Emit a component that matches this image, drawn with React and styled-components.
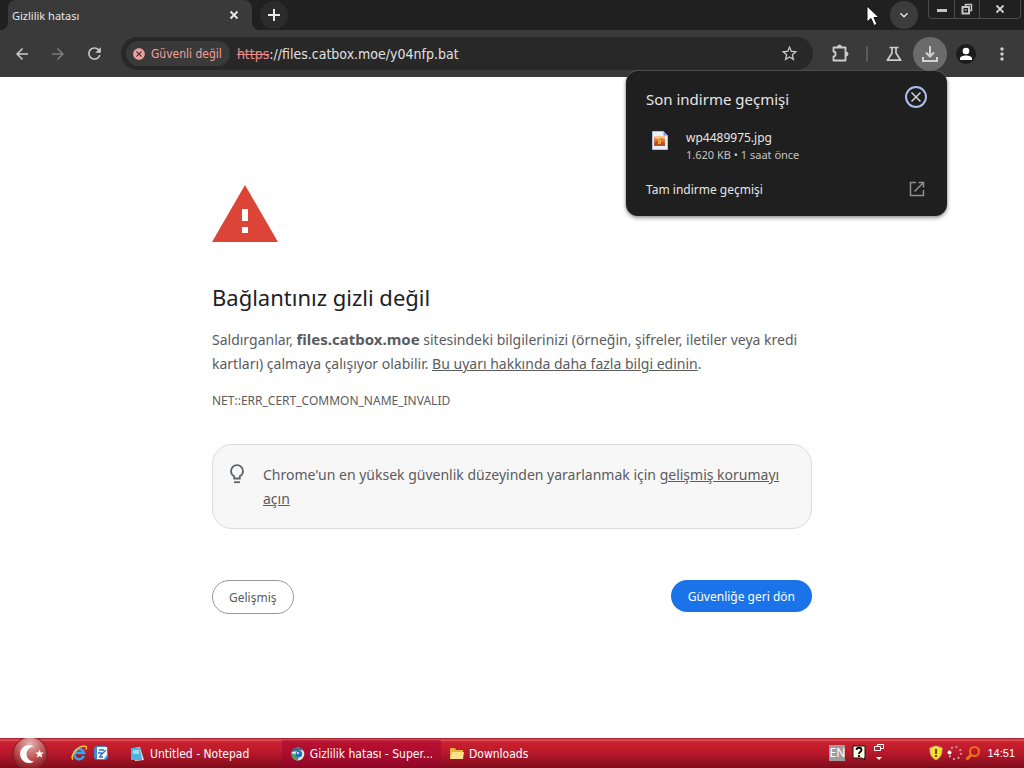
import React from "react";
import styled, { createGlobalStyle, css } from "styled-components";
import { MdArrowBack, MdArrowForward, MdRefresh, MdStarBorder, MdMoreVert, MdCancel, MdKeyboardArrowDown } from "react-icons/md";

const GlobalStyle = createGlobalStyle`
    * {
        box-sizing: border-box;
    }
    body {
        margin: 0;
        background: #ffffff;
    }
    body, button, input {
        font-family: "Noto Sans", "DejaVu Sans Condensed", sans-serif;
    }
    button {
        padding: 0;
        border: none;
        background: none;
        color: inherit;
        cursor: pointer;
    }
`;

const condensed = `"DejaVu Sans Condensed", "Noto Sans", sans-serif`;

const Screen = styled.div`
    min-height: 100vh;
    display: flex;
    flex-direction: column;
`;

/* tab strip */

const TabStrip = styled.header`
    height: 30px;
    display: flex;
    align-items: stretch;
    background: #202020;
    color: #e8e8e8;
`;

const Tab = styled.div`
    position: relative;
    width: 244px;
    margin-left: 8px;
    padding: 0 10px 0 4px;
    display: flex;
    align-items: center;
    justify-content: space-between;
    border-radius: 8px 8px 0 0;
    background: #3a3a3a;

    &::before, &::after {
        content: "";
        position: absolute;
        bottom: 0;
        width: 8px;
        height: 8px;
    }
    &::before {
        left: -8px;
        background: radial-gradient(circle at 0 0, #202020 8px, #3a3a3a 8px);
    }
    &::after {
        right: -8px;
        background: radial-gradient(circle at 100% 0, #202020 8px, #3a3a3a 8px);
    }
`;

const TabTitle = styled.span`
    font-size: 11px;
    white-space: nowrap;
`;

const TabClose = styled.button`
    width: 16px;
    height: 16px;
    display: flex;
    align-items: center;
    justify-content: center;
`;

const RoundButton = styled.button`
    width: ${({ $size }) => $size}px;
    height: ${({ $size }) => $size}px;
    align-self: center;
    display: flex;
    align-items: center;
    justify-content: center;
    flex-shrink: 0;
    border-radius: 50%;
    background: ${({ $bg }) => $bg};
`;

const StripLeft = styled.div`
    flex: 1;
    display: flex;
    gap: 8px;
`;

const StripRight = styled.div`
    display: flex;
    align-items: flex-start;
    gap: 10px;
    padding-right: 3px;
`;

const WindowControls = styled.div`
    display: flex;
    height: 19px;
    border: 1px solid #4c4c4c;
    border-top: none;
    border-radius: 0 0 4px 4px;
`;

const WindowButton = styled.button`
    width: ${({ $wide }) => ($wide ? 41 : 25)}px;
    display: flex;
    align-items: center;
    justify-content: center;
    color: #cfcfcf;

    & + & {
        border-left: 1px solid #4c4c4c;
    }
`;

/* toolbar */

const Toolbar = styled.div`
    position: relative;
    height: 47px;
    padding: 0 4px;
    display: flex;
    align-items: center;
    background: #3a3a3a;
    color: #c9c9c9;
`;

const ToolButton = styled.button`
    width: 36px;
    height: 34px;
    display: flex;
    align-items: center;
    justify-content: center;
    flex-shrink: 0;
    color: ${({ $dim }) => ($dim ? "#7d7d7d" : "#cdcdcd")};
`;

const ActiveCircle = styled.span`
    width: 34px;
    height: 34px;
    display: flex;
    align-items: center;
    justify-content: center;
    border-radius: 50%;
    background: #6b6b6b;
`;

const AvatarCircle = styled.span`
    width: 20px;
    height: 20px;
    display: flex;
    align-items: center;
    justify-content: center;
    border-radius: 50%;
    background: #1c1c1c;
`;

const Divider = styled.span`
    width: 2px;
    height: 16px;
    margin: 0 8px;
    border-radius: 1px;
    background: #5a5a5a;
`;

const AddressBar = styled.div`
    flex: 1;
    height: 33px;
    margin: 0 9px;
    padding: 0 14px 0 5px;
    display: flex;
    align-items: center;
    border-radius: 17px;
    background: #282828;
`;

const SecurityChip = styled.button`
    height: 25px;
    margin-right: 7px;
    padding: 0 8px 0 6px;
    display: flex;
    align-items: center;
    gap: 5px;
    border-radius: 13px;
    background: #3a3a3a;
    color: #f2a09c;
    font-family: ${condensed};
    font-size: 12px;
    white-space: nowrap;
`;

const Scheme = styled.label`
    color: #ee8a88;
    font-family: ${condensed};
    font-size: 14px;
    text-decoration: line-through;
`;

const UrlInput = styled.input`
    flex: 1;
    min-width: 0;
    padding: 0;
    border: none;
    outline: none;
    background: none;
    color: #e0e0e0;
    font-family: ${condensed};
    font-size: 14px;
`;

/* downloads popup */

const DownloadPopup = styled.section`
    position: absolute;
    top: 41px;
    right: 77px;
    z-index: 2;
    width: 321px;
    padding: 14px 19px 16px 20px;
    border-radius: 12px;
    background: #1f1f1f;
    box-shadow: 0 0 2px #8a8a8a, 0 2px 4px rgba(0, 0, 0, 0.4);
    color: #e6e6e6;
`;

const PopupHeader = styled.div`
    height: 26px;
    display: flex;
    align-items: flex-start;
    justify-content: space-between;
`;

const PopupTitle = styled.h2`
    margin: 0;
    font-size: 15px;
    font-weight: 400;
    line-height: 28px;
`;

const PopupClose = styled.button`
    height: 24px;
    display: flex;
`;

const FileRow = styled.div`
    margin: 18px 0 15px 5px;
    display: flex;
    align-items: flex-start;
    gap: 17px;
`;

const FileIcon = styled.span`
    display: flex;
    padding-top: 2px;
`;

const FileText = styled.div`
    display: flex;
    flex-direction: column;
`;

const FileName = styled.span`
    font-size: 12px;
    line-height: 18px;
`;

const FileMeta = styled.span`
    color: #c4c4c4;
    font-size: 11px;
    line-height: 16px;
`;

const HistoryLink = styled.a`
    height: 22px;
    padding-right: 3px;
    display: flex;
    align-items: center;
    justify-content: space-between;
    color: #e6e6e6;
    font-size: 12px;
    text-decoration: none;
`;

/* warning page */

const Page = styled.main`
    flex: 1;
    padding: 108px 24px 40px;
    background: #ffffff;
    color: #5a5b5e;
`;

const Warning = styled.div`
    max-width: 600px;
    margin: 0 auto;
`;

const WarningArt = styled.div`
    height: 57px;
    display: flex;
`;

const Heading = styled.h1`
    margin: 40px 0 16px;
    color: #202124;
    font-size: 22px;
    font-weight: 400;
    line-height: 30px;
`;

const Paragraph = styled.p`
    margin: 0;
    font-size: 14px;
    line-height: 24px;
`;

const Host = styled.strong`
    font-size: 15px;
    line-height: 20px;
`;

const TextLink = styled.a`
    color: inherit;
    text-decoration: underline;
`;

const ErrorCode = styled.div`
    margin: 16px 0 34px;
    font-size: 12px;
    line-height: 18px;
`;

const Tip = styled.div`
    padding: 18px 20px 17px 14px;
    display: flex;
    align-items: flex-start;
    gap: 16px;
    border: 1px solid #dadce0;
    border-radius: 20px;
    background: #f7f7f7;

    svg {
        flex-shrink: 0;
    }
`;

const Actions = styled.div`
    margin-top: 51px;
    display: flex;
    align-items: flex-start;
    justify-content: space-between;
`;

const PillButton = styled.button`
    height: 34px;
    padding: 0 16px;
    border: 1px solid #9a9a9a;
    border-radius: 17px;
    color: #5a5b5e;
    font-size: 12px;

    ${({ $primary }) => $primary && css`
        height: 32px;
        padding: 0 17px;
        border: none;
        background: #1a73e8;
        color: #ffffff;
    `}
`;

/* taskbar */

const Taskbar = styled.footer`
    height: 30px;
    display: flex;
    align-items: center;
    background: linear-gradient(#a01420 0, #e0555c 2px, #c9202e 4px, #bf1b2d 12px, #a61427 20px, #7d0c1a 30px);
    color: #ffffff;
`;

const StartButton = styled.button`
    width: 60px;
    height: 30px;
    display: flex;
    align-items: center;
    justify-content: center;
`;

const QuickLaunch = styled.div`
    margin-left: 11px;
    display: flex;
    gap: 6px;

    button {
        height: 16px;
    }
`;

const TaskList = styled.div`
    flex: 1;
    margin-left: 13px;
    display: flex;
    height: 30px;
    padding-top: 2px;
`;

const TaskButton = styled.button`
    width: ${({ $width }) => $width}px;
    padding: 0 8px;
    display: flex;
    align-items: center;
    gap: 4px;
    color: #ffffff;
    font-family: ${condensed};
    font-size: 12px;
    white-space: nowrap;
    background: ${({ $active }) => ($active ? "rgba(160, 0, 50, 0.45)" : "none")};
`;

const Language = styled.button`
    width: 16px;
    height: 16px;
    background: #a09b9d;
    color: #ffffff;
    font-size: 12px;
    line-height: 16px;
`;

const LanguageBar = styled.div`
    display: flex;
    align-items: center;
    gap: 7px;
    margin-right: 44px;
`;

const Tray = styled.div`
    padding-right: 9px;
    display: flex;
    align-items: center;
    gap: 3px;
`;

const Clock = styled.time`
    margin-left: 3px;
    font-family: "Liberation Sans", sans-serif;
    font-size: 11px;
`;

const Cursor = styled.svg`
    position: absolute;
    top: 5px;
    right: 145px;
    z-index: 3;
    pointer-events: none;
`;

const MinimizeIcon = () => (
    <svg width="12" height="10"><rect x="1" y="5" width="10" height="3" fill="#c4c4c4" /></svg>
);

const RestoreIcon = () => (
    <svg width="12" height="12" fill="none" stroke="#c4c4c4">
        <path d="M4.500 3V1.500h6v6H9" strokeWidth="1.500" />
        <rect x="1.500" y="4" width="6.500" height="6.500" strokeWidth="2" />
        <path d="M3.500 7h2.500" />
    </svg>
);

const CrossIcon = () => (
    <svg width="10" height="10" stroke="currentColor" strokeWidth="1.800">
        <path d="M1.500 1.500l7 7M8.500 1.500l-7 7" />
    </svg>
);

const PlusIcon = () => (
    <svg width="12" height="12" stroke="currentColor" strokeWidth="2">
        <path d="M6 0v12M0 6h12" />
    </svg>
);

const PuzzleIcon = () => (
    <svg width="20" height="20" viewBox="0 0 20 20" fill="none" stroke="currentColor" strokeWidth="1.800" strokeLinejoin="round">
        <path d="M3.500 3.500h12v13h-12v-4c2.800 0 2.800-5 0-5z" />
        <path d="M7.500 3a2 2 0 0 1 4 0zM16 8a2 2 0 0 1 0 4z" fill="currentColor" strokeWidth="1" />
    </svg>
);

const FlaskIcon = () => (
    <svg width="18" height="18" viewBox="0 0 18 18" fill="none" stroke="currentColor" strokeWidth="1.700" strokeLinejoin="round">
        <path d="M4.500 2.500h9M7 3v5l-4.700 7.200h13.400L11 8V3" />
    </svg>
);

const DownloadIcon = () => (
    <svg width="18" height="18" viewBox="0 0 18 18" fill="none" stroke="#d0d0d0" strokeWidth="2">
        <path d="M9 1v10M5 7.500l4 4 4-4M2 12v4h14v-4" />
    </svg>
);

const PersonIcon = () => (
    <svg width="14" height="14" viewBox="0 0 14 14" fill="#ffffff">
        <circle cx="7" cy="4" r="3.300" />
        <path d="M1 13v-1.500C1 9.500 4 8.500 7 8.500s6 1 6 3V13z" />
    </svg>
);

const CloseCircleIcon = () => (
    <svg width="24" height="24" viewBox="0 0 24 24" fill="none">
        <circle cx="12" cy="12" r="10" stroke="#a9bfee" strokeWidth="2" />
        <path d="M7.500 7.500l9 9M16.500 7.500l-9 9" stroke="#cfd2d8" strokeWidth="1.500" />
    </svg>
);

const ImageFileIcon = () => (
    <svg width="18" height="20" viewBox="0 0 18 20">
        <path d="M1.500.500h11l4 4v14h-15z" fill="#e9f0fc" stroke="#a9bfee" />
        <path d="M12.500.500v4h4z" fill="#6f92e6" />
        <rect x="3" y="5" width="11" height="10" fill="#d87a35" />
        <path d="M3 5h11v3l-4-1-3 1-4-1z" fill="#f8c68a" />
        <path d="M3 12l3-2 3 2 2-1 3 1v3H3z" fill="#b7531c" />
        <path d="M7 8h3v5H7z" fill="#f39a48" />
    </svg>
);

const OpenNewIcon = () => (
    <svg width="16" height="16" viewBox="0 0 16 16" fill="none" stroke="#8f8f8f" strokeWidth="1.500">
        <path d="M7 1.500H1.500v13h13V9M9.500 1.500h5v5M14.500 1.500L5.500 10.500" />
    </svg>
);

const WarningIcon = () => (
    <svg width="66" height="57" viewBox="0 0 66 57">
        <path d="M33 0l33 57H0z" fill="#db4437" />
        <path d="M30 24h6v12h-6zM30 42h6v6h-6z" fill="#ffffff" />
    </svg>
);

const BulbIcon = () => (
    <svg width="20" height="22" viewBox="0 0 20 22" fill="none" stroke="#5f6368" strokeWidth="1.800">
        <path d="M7.200 15.500v-2.300C5 12 4 10.200 4 8.200a6 6 0 0 1 12 0c0 2-1 3.800-3.200 5v2.300z" />
        <path d="M7 19.200h6" />
    </svg>
);

const StartIcon = () => (
    <svg width="36" height="30" viewBox="0 0 36 30">
        <defs>
            <radialGradient id="orb" cx="50%" cy="20%" r="80%">
                <stop offset="0" stopColor="#e6b5b0" />
                <stop offset="0.550" stopColor="#bd5152" />
                <stop offset="1" stopColor="#7a1018" />
            </radialGradient>
        </defs>
        <circle cx="18" cy="16" r="17" fill="url(#orb)" stroke="#7a1c22" />
        <path d="M22 8.500a9 9 0 1 0 0 15 7.300 7.300 0 1 1 0-15z" fill="#ffffff" />
        <path d="M27.500 11.500l1.200 3 3.200.100-2.500 2 .900 3.100-2.800-1.800-2.700 1.800.900-3.100-2.500-2 3.200-.100z" fill="#ffffff" />
    </svg>
);

const IeIcon = () => (
    <svg width="16" height="16" viewBox="0 0 16 16" fill="none">
        <path d="M12.800 10.800A5 5 0 1 1 13 8H4.500" stroke="#31a5ee" strokeWidth="2.600" />
        <path d="M2 14.500C-1 11 7-.500 15 1.500c1 .500.500 2 0 3" stroke="#f3c832" strokeWidth="1.500" />
    </svg>
);

const DesktopIcon = () => (
    <svg width="16" height="16" viewBox="0 0 16 16">
        <rect x="1" y="1" width="14" height="14" rx="4" fill="#3d8ed2" />
        <path d="M4 2h10v8l-3 4H4z" fill="#eef6fb" />
        <path d="M6 5h5M5 8h4M7 11l6-6M6 12h4" stroke="#2b73b5" strokeWidth="1.300" />
    </svg>
);

const NotepadIcon = () => (
    <svg width="16" height="16" viewBox="0 0 16 16">
        <path d="M3 2l7-1 4 13-9 1z" fill="#d4dde6" />
        <path d="M1 2h9l2 12H1z" fill="#4db5dc" />
        <path d="M3 4h6v4H3z" fill="#9be0f2" />
    </svg>
);

const BrowserIcon = () => (
    <svg width="16" height="16" viewBox="0 0 16 16">
        <circle cx="8" cy="8" r="6.500" fill="#dcebe8" />
        <path d="M1.500 6a7 7 0 0 1 12-2L8 5z" fill="#39718f" />
        <path d="M1.500 7a7 7 0 0 0 6 7.500L10 10z" fill="#4a9b67" />
        <circle cx="9" cy="8" r="3.300" fill="#256fc0" />
        <circle cx="8" cy="7" r="1" fill="#ffffff" />
    </svg>
);

const FolderIcon = () => (
    <svg width="16" height="16" viewBox="0 0 16 16">
        <path d="M1 3l1-1h4l1 2h7v9H1z" fill="#e8b53e" />
        <path d="M3 6h12l-1 7H1z" fill="#ffe28a" />
    </svg>
);

const HelpIcon = () => (
    <svg width="14" height="16" viewBox="0 0 14 16">
        <path d="M1 1h12v12h-1l1 2-3-2H1z" fill="#ffffe8" stroke="#201010" />
        <path d="M4.500 5c0-3 5-3 5 0 0 2-2.500 1.500-2.500 4M7 10v2" fill="none" stroke="#000000" strokeWidth="1.800" />
    </svg>
);

const BarOptionsIcon = () => (
    <svg width="12" height="20" viewBox="0 0 12 20" fill="none" stroke="#ffffff">
        <path d="M4.500 3V1.500h6v4H8M1.500 3.500h6v4h-6z" />
        <path d="M3 14h6l-3 3z" fill="#ffffff" stroke="none" />
    </svg>
);

const ShieldIcon = () => (
    <svg width="14" height="16" viewBox="0 0 14 16">
        <path d="M7 1l6 2c0 6-1 9-6 12C2 12 1 9 1 3z" fill="#f7dc29" stroke="#c9b98a" />
        <path d="M6 4h2v5H6zM6 10h2v2H6z" fill="#5b4a08" />
    </svg>
);

const SpinnerIcon = () => (
    <svg width="16" height="16" viewBox="0 0 16 16" fill="none">
        <circle cx="9" cy="8" r="6" stroke="#e0a0a4" strokeWidth="2" strokeDasharray="1.700 3" />
        <circle cx="3.500" cy="7.500" r="2" fill="#ffffff" />
    </svg>
);

const SearchIcon = () => (
    <svg width="16" height="16" viewBox="0 0 16 16" fill="none" stroke="#f0701c" strokeWidth="2">
        <circle cx="9.500" cy="6.500" r="4.500" />
        <path d="M6 10l-4.500 4.500" strokeWidth="3" />
    </svg>
);

const TabBar = () => {
    return (
        <TabStrip>
            <StripLeft>
                <Tab>
                    <TabTitle>Gizlilik hatası</TabTitle>
                    <TabClose aria-label="Sekmeyi kapat"><CrossIcon /></TabClose>
                </Tab>
                <RoundButton $size={28} $bg="#2b2b2b" aria-label="Yeni sekme"><PlusIcon /></RoundButton>
            </StripLeft>
            <StripRight>
                <RoundButton $size={28} $bg="#3c3c3c" aria-label="Sekmelerde ara"><MdKeyboardArrowDown size={16} /></RoundButton>
                <WindowControls>
                    <WindowButton aria-label="Küçült"><MinimizeIcon /></WindowButton>
                    <WindowButton aria-label="Geri yükle"><RestoreIcon /></WindowButton>
                    <WindowButton $wide aria-label="Kapat"><CrossIcon /></WindowButton>
                </WindowControls>
            </StripRight>
        </TabStrip>
    );
}

const Downloads = () => {
    return (
        <DownloadPopup>
            <PopupHeader>
                <PopupTitle>Son indirme geçmişi</PopupTitle>
                <PopupClose aria-label="Kapat"><CloseCircleIcon /></PopupClose>
            </PopupHeader>
            <FileRow>
                <FileIcon><ImageFileIcon /></FileIcon>
                <FileText>
                    <FileName>wp4489975.jpg</FileName>
                    <FileMeta>1.620 KB • 1 saat önce</FileMeta>
                </FileText>
            </FileRow>
            <HistoryLink href="#downloads">
                Tam indirme geçmişi
                <OpenNewIcon />
            </HistoryLink>
        </DownloadPopup>
    );
}

const App = () => {
    return (
        <Screen>
            <GlobalStyle />
            <TabBar />
            <Toolbar>
                <ToolButton aria-label="Geri"><MdArrowBack size={18} /></ToolButton>
                <ToolButton $dim aria-label="İleri"><MdArrowForward size={18} /></ToolButton>
                <ToolButton aria-label="Yenile"><MdRefresh size={19} /></ToolButton>
                <AddressBar>
                    <SecurityChip><MdCancel size={14} />Güvenli değil</SecurityChip>
                    <Scheme htmlFor="url">https</Scheme>
                    <UrlInput id="url" type="text" defaultValue="://files.catbox.moe/y04nfp.bat" />
                    <MdStarBorder size={19} />
                </AddressBar>
                <ToolButton aria-label="Uzantılar"><PuzzleIcon /></ToolButton>
                <Divider />
                <ToolButton aria-label="Deneyler"><FlaskIcon /></ToolButton>
                <ToolButton aria-label="İndirilenler"><ActiveCircle><DownloadIcon /></ActiveCircle></ToolButton>
                <ToolButton aria-label="Profil"><AvatarCircle><PersonIcon /></AvatarCircle></ToolButton>
                <ToolButton aria-label="Menü"><MdMoreVert size={20} /></ToolButton>
                <Downloads />
            </Toolbar>
            <Page>
                <Warning>
                    <WarningArt><WarningIcon /></WarningArt>
                    <Heading>Bağlantınız gizli değil</Heading>
                    <Paragraph>
                        Saldırganlar, <Host>files.catbox.moe</Host> sitesindeki bilgilerinizi (örneğin, şifreler, iletiler veya kredi kartları) çalmaya çalışıyor olabilir. <TextLink href="#learn-more">Bu uyarı hakkında daha fazla bilgi edinin</TextLink>.
                    </Paragraph>
                    <ErrorCode>NET::ERR_CERT_COMMON_NAME_INVALID</ErrorCode>
                    <Tip>
                        <BulbIcon />
                        <Paragraph>
                            Chrome'un en yüksek güvenlik düzeyinden yararlanmak için <TextLink href="#protection">gelişmiş korumayı açın</TextLink>
                        </Paragraph>
                    </Tip>
                    <Actions>
                        <PillButton>Gelişmiş</PillButton>
                        <PillButton $primary>Güvenliğe geri dön</PillButton>
                    </Actions>
                </Warning>
            </Page>
            <Taskbar>
                <StartButton aria-label="Başlat"><StartIcon /></StartButton>
                <QuickLaunch>
                    <button aria-label="Internet Explorer"><IeIcon /></button>
                    <button aria-label="Masaüstü"><DesktopIcon /></button>
                </QuickLaunch>
                <TaskList>
                    <TaskButton $width={160}><NotepadIcon />Untitled - Notepad</TaskButton>
                    <TaskButton $width={159} $active><BrowserIcon />Gizlilik hatası - Super...</TaskButton>
                    <TaskButton $width={160}><FolderIcon />Downloads</TaskButton>
                </TaskList>
                <LanguageBar>
                    <Language>EN</Language>
                    <HelpIcon />
                    <BarOptionsIcon />
                </LanguageBar>
                <Tray>
                    <ShieldIcon />
                    <SpinnerIcon />
                    <SearchIcon />
                    <Clock>14:51</Clock>
                </Tray>
            </Taskbar>
            <Cursor width="13" height="22" viewBox="0 0 13 22">
                <path d="M1 1v16l4-3.500 3 7 3-1.300-3-6.700h5z" fill="#ffffff" stroke="#111111" />
            </Cursor>
        </Screen>
    );
}

export default App;
